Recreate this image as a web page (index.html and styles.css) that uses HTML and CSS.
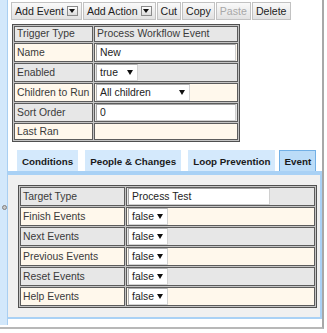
FILE: index.html
```html
<!DOCTYPE html>
<html lang="en">
<head>
  <meta charset="UTF-8" />
  <title>Process Workflow Event</title>
  <link rel="stylesheet" href="styles.css">
</head>
<body>
  <div class="frame">
    <div class="splitter"><span class="grip"></span></div>

    <div class="main">
      <div class="toolbar">
        <button class="btn">Add Event <span class="drop"></span></button>
        <button class="btn">Add Action <span class="drop"></span></button>
        <button class="btn">Cut</button>
        <button class="btn">Copy</button>
        <button class="btn disabled">Paste</button>
        <button class="btn">Delete</button>
      </div>

      <table class="props top">
        <tr class="grey">
          <td class="label">Trigger Type</td>
          <td class="value text">Process Workflow Event</td>
        </tr>
        <tr class="cream">
          <td class="label">Name</td>
          <td class="value"><input type="text" class="field" value="New"></td>
        </tr>
        <tr class="grey">
          <td class="label">Enabled</td>
          <td class="value"><span class="select w-true">true</span></td>
        </tr>
        <tr class="cream">
          <td class="label">Children to Run</td>
          <td class="value"><span class="select w-children">All children</span></td>
        </tr>
        <tr class="grey">
          <td class="label">Sort Order</td>
          <td class="value"><input type="text" class="field" value="0"></td>
        </tr>
        <tr class="cream">
          <td class="label">Last Ran</td>
          <td class="value text"></td>
        </tr>
      </table>

      <div class="tabs">
        <span class="tab">Conditions</span>
        <span class="tab">People &amp; Changes</span>
        <span class="tab">Loop Prevention</span>
        <span class="tab active">Event</span>
      </div>

      <div class="tab-panel">
        <table class="props inner">
          <tr class="grey">
            <td class="label">Target Type</td>
            <td class="value"><input type="text" class="field short" value="Process Test"></td>
          </tr>
          <tr class="cream">
            <td class="label">Finish Events</td>
            <td class="value"><span class="select w-false">false</span></td>
          </tr>
          <tr class="grey">
            <td class="label">Next Events</td>
            <td class="value"><span class="select w-false">false</span></td>
          </tr>
          <tr class="cream">
            <td class="label">Previous Events</td>
            <td class="value"><span class="select w-false">false</span></td>
          </tr>
          <tr class="grey">
            <td class="label">Reset Events</td>
            <td class="value"><span class="select w-false">false</span></td>
          </tr>
          <tr class="cream">
            <td class="label">Help Events</td>
            <td class="value"><span class="select w-false">false</span></td>
          </tr>
        </table>
      </div>
    </div>
  </div>
</body>
</html>
```

FILE: styles.css
```css
* {
  margin: 0;
  padding: 0;
  box-sizing: border-box;
}

body {
  background-color: #fff;
  font-family: "Liberation Sans", Arial, sans-serif;
  color: #333;
}

.frame {
  display: flex;
  width: 324px;
  height: 329px;
  border-right: 2px solid #a8a8a8;
  border-bottom: 2px solid #b8b8b8;
}

/* left splitter strip */
.splitter {
  width: 8px;
  height: 325px;
  background-color: #d3e8fb;
  border-right: 1px solid #a9cff2;
  padding: 205px 0 0 2px;
}

.grip {
  display: block;
  width: 5px;
  height: 5px;
  border-radius: 50%;
  background-color: #c8c8c8;
  border: 1px solid #808080;
}

.main {
  width: 314px;
  padding-top: 2px;
}

/* toolbar */
.toolbar {
  display: flex;
  gap: 1px;
  margin-left: 3px;
}

.btn {
  height: 18px;
  padding: 0 3px;
  display: flex;
  align-items: center;
  gap: 3px;
  font-family: "Liberation Sans", Arial, sans-serif;
  font-size: 10.6px;
  color: #222;
  background: linear-gradient(#fafafa, #e2e2e2);
  border: 1px solid #c2c2c2;
}

.btn.disabled {
  color: #a8a8a8;
}

.drop {
  width: 11px;
  height: 10px;
  border: 1px solid #8a8a8a;
  background: linear-gradient(#fdfdfd, #dcdcdc);
  display: flex;
  align-items: center;
  justify-content: center;
}

.drop::after {
  content: "";
  border-left: 3px solid transparent;
  border-right: 3px solid transparent;
  border-top: 4px solid #111;
}

/* property tables */
.props {
  border-collapse: separate;
  border-spacing: 1px;
  border: 1px solid #505050;
  background-color: #c4c4c4;
  font-size: 10.4px;
  line-height: 12px;
  color: #3a3a3a;
}

.props td {
  border: 1px solid #5c5c5c;
  padding: 1px 2px;
  vertical-align: middle;
  white-space: nowrap;
}

.props tr.grey td {
  background-color: #e7e7e7;
}

.props tr.cream td {
  background-color: #fff8ec;
}

.props .value {
  padding: 0 1px;
}

.props .value.text {
  padding: 1px 2px;
}

.props.top {
  margin: 4px 0 0 4px;
  width: 228px;
}

.props.top .label {
  width: 79px;
}

.props.top .value {
  width: 144px;
}

.props.top tr.cream:last-child td {
  height: 17px;
}

.props.inner {
  width: 299px;
}

.props.inner .label {
  width: 105px;
}

.props.inner .value {
  width: 189px;
}

.field {
  display: block;
  width: 100%;
  height: 17px;
  padding: 0 3px;
  font-family: "Liberation Sans", Arial, sans-serif;
  font-size: 10.4px;
  color: #222;
  background-color: #fff;
  border: 1px solid #d0d0d0;
  border-top-color: #a6a6a6;
  border-left-color: #a6a6a6;
  outline: none;
}

.field.short {
  width: 142px;
}

.select {
  display: flex;
  align-items: center;
  justify-content: space-between;
  height: 17px;
  padding: 0 4px 0 3px;
  background-color: #fff;
  color: #222;
  border: 1px solid #d4d4d4;
  border-top-color: #b0b0b0;
  border-left-color: #b0b0b0;
}

.select::after {
  content: "";
  border-left: 3px solid transparent;
  border-right: 3px solid transparent;
  border-top: 5px solid #111;
}

.w-true {
  width: 42px;
}

.w-children {
  width: 94px;
}

.w-false {
  width: 40px;
}

/* tabs */
.tabs {
  display: flex;
  gap: 7px;
  margin: 8px 0 0 9px;
}

.tab {
  height: 21px;
  padding: 0 4px;
  display: flex;
  align-items: center;
  font-size: 9.8px;
  font-weight: bold;
  color: #1a1a1a;
  background-color: #d4e9fc;
  border: 1px solid #d4e9fc;
  border-bottom: none;
}

.tab.active {
  margin-left: -3px;
  background-color: #bbdcf8;
  border-color: #72b0e6;
}

.tab-panel {
  width: 314px;
  height: 148px;
  background-color: #f0f0f0;
  border-top: 4px solid #a9d1f5;
  border-right: 2px solid #a9d1f5;
  border-bottom: 2px solid #a9d1f5;
  padding: 10px 0 0 10px;
}
```
